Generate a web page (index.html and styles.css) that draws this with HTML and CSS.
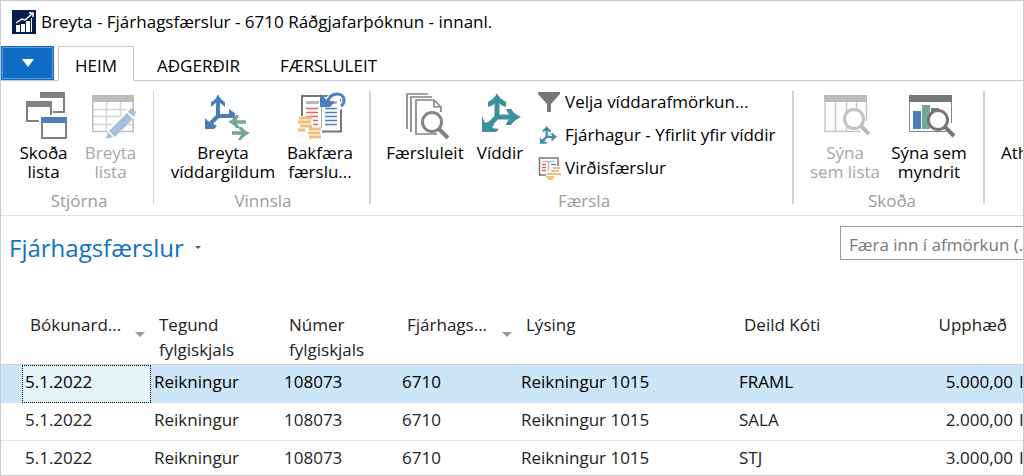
FILE: index.html
```html
<!DOCTYPE html>
<html lang="is">
<head>
<meta charset="utf-8">
<title>Breyta - Fjárhagsfærslur</title>
<link rel="stylesheet" href="styles.css">
</head>
<body>
<svg class="defs" width="0" height="0" aria-hidden="true">
  <symbol id="axes" viewBox="0 0 48 48">
    <path d="M21 8V26M19 26H39M21 26L12 35" fill="none" stroke="currentColor" stroke-width="5"/>
    <path d="M21 2C23 7 27 9 30 11V16C26 15 23 13 21 10C19 13 16 15 12 16V11C15 9 19 7 21 2Z" fill="currentColor"/>
    <path d="M45 26C40 28 37 31 35 34H30C31 30 33 28 36 26C33 24 31 21 30 18H35C37 21 40 24 45 26Z" fill="currentColor"/>
    <path d="M6 25L9 32L14 30L18 34L16 37L23 38L20 41H6Z" fill="currentColor"/>
  </symbol>
  <symbol id="coins" viewBox="0 0 24 24">
    <path d="M1 2H14M0 6H13M2 10H14M0 14H7M11 13H23M10 17H22M11 21H23" stroke="#eac282" stroke-width="3"/>
  </symbol>
</svg>
<div class="window">
  <header class="titlebar">
    <svg class="app-icon" viewBox="0 0 24 24" aria-hidden="true">
      <path d="M0 0H24V24H0Z" fill="#051f4d"/>
      <path d="M4 15H8V22H4ZM9 14H13V22H9ZM14 11H18V22H14ZM19 8H20V22H19Z" fill="#fff"/>
      <path d="M4 13L10 9L13 10L20 4M17 3H21V7" fill="none" stroke="#fff" stroke-width="1.5"/>
    </svg>
    <h1 class="window-title">Breyta - Fjárhagsfærslur - 6710 Ráðgjafarþóknun - innanl.</h1>
  </header>

  <nav class="tabs">
    <button class="app-menu" type="button" aria-label="Valmynd">
      <svg width="12" height="8" viewBox="0 0 12 8"><path d="M0 0H12L6 8Z" fill="#fff"/></svg>
    </button>
    <button class="tab tab-active" type="button">HEIM</button>
    <button class="tab" type="button">AÐGERÐIR</button>
    <button class="tab" type="button">FÆRSLULEIT</button>
  </nav>

  <section class="ribbon">
    <div class="group group-manage">
      <div class="group-items">
        <button class="command" type="button">
          <svg class="icon" viewBox="0 0 48 48">
            <path d="M20 1H45V22H33V20H43V7H20Z" fill="#808080"/>
            <path d="M6 10H32V24H30V16H8V29H19V31H6Z" fill="#808080"/>
            <path d="M21 32H47V48H21ZM23 32V46H45V32Z" fill="#808080" fill-rule="evenodd"/>
            <path d="M21 26H47V32H21Z" fill="#4b80ba"/>
          </svg>
          <span>Skoða<br>lista</span>
        </button>
        <button class="command" type="button" disabled>
          <svg class="icon" viewBox="0 0 48 48">
            <path d="M6 11V40.500H46V11M6 18.500H46M6 25.500H46M6 33.500H46M19.500 11V40M33.500 11V40" fill="none" stroke="#d4d4d4" stroke-width="1.500"/>
            <path d="M5 4H47V11H5ZM5 11H6V41H5ZM46 11H47V41H46ZM5 40H47V41H5Z" fill="#bcbcbc"/>
            <path d="M20 48L21 38L42 17L50 24L29 45Z" fill="#fff"/>
            <path d="M19 48L21 41L26 46ZM22 40L40 22L46 28L28 46ZM41 21L44 17L49 21L47 26Z" fill="#a5c1de"/>
          </svg>
          <span>Breyta<br>lista</span>
        </button>
      </div>
      <div class="group-label">Stjórna</div>
    </div>

    <div class="group group-process">
      <div class="group-items">
        <button class="command command-wide" type="button">
          <svg class="icon" viewBox="0 0 48 48">
            <path d="M19 9V25H36M20 24L11 33" fill="none" stroke="#4b7db5" stroke-width="4"/>
            <path d="M19 3C21 8 24 10 26 11V16L19 10L12 16V11C15 10 17 8 19 3ZM30 18L37 23H30ZM6 27L9 30L18 35L15 38H6Z" fill="#4b7db5"/>
            <path d="M34 31H47M33 42H46" stroke="#73a893" stroke-width="3.500"/>
            <path d="M29 31C33 29 35 27 37 24H40L37 31L41 37H37C35 34 32 32 29 31ZM51 42C47 44 44 46 42 49H39L43 42L39 36H43C45 39 48 41 51 42Z" fill="#73a893"/>
          </svg>
          <span>Breyta<br>víddargildum</span>
        </button>
        <button class="command command-reverse" type="button">
          <svg class="icon" viewBox="0 0 48 48">
            <path d="M6 25V5H45V40.500H26" fill="none" stroke="#777" stroke-width="2"/>
            <path d="M25.500 15V37" stroke="#aaa"/>
            <path d="M10 10H23V13H10ZM36 10H41V13H36Z" fill="#b8b8b8"/>
            <path d="M10 17.500H22M10 21.500H22M10 25.500H22M17 29.500H22M17 33.500H22" stroke="#d9694f" stroke-width="1.400"/>
            <path d="M29 17.500H41M29 21.500H41M29 25.500H41M29 29.500H41M29 33.500H41" stroke="#4b80ba" stroke-width="1.400"/>
            <path d="M32 11C35 0 48 1 48 9Q48 14 43 16" fill="none" stroke="#fff" stroke-width="6"/>
            <path d="M31 12C34 0 48 1 48 9Q48 13 45 15" fill="none" stroke="#4b80ba" stroke-width="3"/>
            <path d="M24 3L31 9L39 11L34 16H24Z" fill="#4b80ba"/>
            <use href="#coins" x="2" y="25" width="24" height="24"/>
          </svg>
          <span>Bakfæra<br>færslu...</span>
        </button>
      </div>
      <div class="group-label">Vinnsla</div>
    </div>

    <div class="group group-entry">
      <div class="group-items">
        <button class="command command-search" type="button">
          <svg class="icon" viewBox="0 0 48 48">
            <path d="M6 38V3H27M10 41V6H31M36 43H15V9H33L40 16V21M33 9V16H40" fill="none" stroke="#858585" stroke-width="1.700"/>
            <circle cx="31" cy="31" r="9.500" fill="#fff" stroke="#858585" stroke-width="3"/>
            <path d="M38 38L47 47" stroke="#808080" stroke-width="4"/>
          </svg>
          <span>Færsluleit</span>
        </button>
        <button class="command command-dims" type="button">
          <svg class="icon teal" viewBox="0 0 48 48"><use href="#axes"/></svg>
          <span>Víddir</span>
        </button>
        <div class="small-list">
          <button class="small-command" type="button">
            <svg class="small-icon" viewBox="0 0 22 22"><path d="M0 1H22V3L13 13V21H9V13L0 3Z" fill="#777"/></svg>
            Velja víddarafmörkun...
          </button>
          <button class="small-command" type="button">
            <svg class="small-icon teal" viewBox="2 -2 48 48"><use href="#axes" width="48" height="48"/></svg>
            Fjárhagur - Yfirlit yfir víddir
          </button>
          <button class="small-command" type="button">
            <svg class="small-icon" viewBox="0 0 22 22">
              <path d="M8 18H1.500V1H20V9" fill="none" stroke="#777" stroke-width="1.500"/>
              <path d="M4 4.500H17M10.500 4V14" stroke="#bbb" stroke-width="1.500"/>
              <path d="M4 7.500H8M4 10.500H8M4 13.500H8" stroke="#d9694f" stroke-width="1.300"/>
              <path d="M13 7.500H18" stroke="#4b80ba" stroke-width="1.300"/>
              <path d="M15 11H22M13 14H21M15 17H23M9 17H15M8 20H16M10 22H15" stroke="#eac282" stroke-width="2"/>
            </svg>
            Virðisfærslur
          </button>
        </div>
      </div>
      <div class="group-label">Færsla</div>
    </div>

    <div class="group group-view">
      <div class="group-items">
        <button class="command command-list" type="button" disabled>
          <svg class="icon" viewBox="0 0 48 48">
            <path d="M3 4H46V11H3Z" fill="#bcbcbc"/>
            <path d="M4 11V40.500H40M14.500 11V40M25.500 11V40M35.500 11V19M45.500 11V30" fill="none" stroke="#c8c8c8" stroke-width="1.500"/>
            <circle cx="33" cy="28" r="9.500" fill="#fff" stroke="#c2c2c2" stroke-width="3"/>
            <path d="M40 35L48 43" stroke="#bcbcbc" stroke-width="4"/>
          </svg>
          <span>Sýna<br>sem lista</span>
        </button>
        <button class="command command-chart" type="button">
          <svg class="icon" viewBox="0 0 48 48">
            <path d="M4 4H47V11H4Z" fill="#777"/>
            <path d="M4.500 11V40.500H41M46.500 11V32" fill="none" stroke="#858585"/>
            <path d="M8 20H16V38H8Z" fill="#4b80ba"/>
            <path d="M17 14H25V38H17Z" fill="#73a893"/>
            <path d="M26 17H34V30H26Z" fill="#777"/>
            <circle cx="33" cy="29" r="9.500" fill="#fff" stroke="#777" stroke-width="3"/>
            <path d="M40 36L49 45" stroke="#777" stroke-width="4"/>
          </svg>
          <span>Sýna sem<br>myndrit</span>
        </button>
      </div>
      <div class="group-label">Skoða</div>
    </div>

    <div class="group group-next">
      <div class="group-items">
        <button class="command command-next" type="button">
          <svg class="icon" viewBox="0 0 48 48"></svg>
          <span>Ath</span>
        </button>
      </div>
    </div>
  </section>

  <section class="page-head">
    <h2 class="page-title">Fjárhagsfærslur</h2>
    <button class="title-menu" type="button" aria-label="Afmörkun">
      <svg width="6" height="3" viewBox="0 0 6 3"><path d="M0 0H6L3 3Z" fill="#555"/></svg>
    </button>
    <input class="filter" type="text" placeholder="Færa inn í afmörkun (..." aria-label="Færa inn í afmörkun">
  </section>

  <table class="grid">
    <colgroup>
      <col class="c-select"><col class="c-date"><col class="c-type"><col class="c-number"><col class="c-account"><col class="c-text"><col class="c-dept"><col class="c-amount"><col class="c-more">
    </colgroup>
    <thead>
      <tr>
        <th></th>
        <th class="sorted">Bókunard...</th>
        <th>Tegund fylgiskjals</th>
        <th>Númer fylgiskjals</th>
        <th class="sorted">Fjárhags...</th>
        <th>Lýsing</th>
        <th>Deild Kóti</th>
        <th class="amount">Upphæð</th>
        <th></th>
      </tr>
    </thead>
    <tbody>
      <tr class="selected"><td></td><td class="focus">5.1.2022</td><td>Reikningur</td><td>108073</td><td>6710</td><td>Reikningur 1015</td><td>FRAML</td><td class="amount">5.000,00</td><td>I</td></tr>
      <tr><td></td><td>5.1.2022</td><td>Reikningur</td><td>108073</td><td>6710</td><td>Reikningur 1015</td><td>SALA</td><td class="amount">2.000,00</td><td>I</td></tr>
      <tr><td></td><td>5.1.2022</td><td>Reikningur</td><td>108073</td><td>6710</td><td>Reikningur 1015</td><td>STJ</td><td class="amount">3.000,00</td><td>I</td></tr>
    </tbody>
  </table>
</div>
</body>
</html>
```
FILE: styles.css
```css
* {
  box-sizing: border-box;
}

body {
  margin: 0;
  background: #fff;
  color: #000;
  font: 17px/20px "Open Sans", "Noto Sans", sans-serif;
}

button,
input {
  margin: 0;
  padding: 0;
  border: 0;
  background: none;
  color: inherit;
  font: inherit;
}

h1,
h2 {
  margin: 0;
  font-weight: 400;
}

.defs {
  position: absolute;
}

.window {
  height: 100vh;
  overflow: hidden;
  border: 1px solid #ccc;
}

.titlebar {
  display: flex;
  align-items: center;
  gap: 5px;
  height: 45px;
  padding: 0 11px 4px;
}

.app-icon {
  width: 24px;
  height: 24px;
}

.window-title {
  font-size: 17px;
  white-space: nowrap;
}

.tabs {
  display: flex;
  height: 35px;
  border-bottom: 1px solid #ccc;
}

.app-menu {
  width: 53px;
  height: 34px;
  margin-right: 4px;
  border: 1px solid #0e6cc4;
  outline: 1px solid #5b9bd8;
  outline-offset: -2px;
  background: #0e6cc4;
}

.app-menu svg {
  display: block;
  margin: 0 auto;
}

.tab {
  height: 35px;
  padding: 4px 16px 0;
  border: 1px solid transparent;
  margin-right: 6px;
}

.tab-active {
  border-color: #ccc;
  border-bottom-color: #fff;
  background: #fff;
}

.ribbon {
  display: flex;
  overflow: hidden;
  padding-top: 10px;
  height: 135px;
  border-bottom: 1px solid #e2e2e2;
}

.group {
  display: flex;
  flex: none;
  flex-direction: column;
  height: 113px;
  padding: 0 9px;
  border-right: 2px solid #d2d2d2;
}

.group-items {
  display: flex;
  flex: none;
  height: 102px;
}

.group-label {
  color: #9c9c9c;
  line-height: 16px;
  padding-left: 4px;
  text-align: center;
}

.command {
  display: flex;
  flex-direction: column;
  align-items: center;
  width: 67px;
  line-height: 19px;
  height: 94px;
  gap: 4px;
  white-space: nowrap;
}

.command:disabled {
  color: #a6a6a6;
}

.icon {
  flex: none;
  width: 48px;
  height: 48px;
  overflow: visible;
}

.teal {
  color: #3f909f;
}

.command-wide {
  width: 118px;
}

.command-reverse {
  width: 76px;
}

.command-search {
  width: 88px;
}

.command-dims {
  width: 62px;
}

.command-list {
  width: 78px;
}

.command-chart {
  width: 90px;
}

.group-manage {
  border-right-width: 1px;
}

.group-process {
  padding: 0 11px 0 10px;
}

.group-entry {
  width: 423px;
  padding-left: 10px;
}

.group-view {
  width: 191px;
  padding: 0 9px 0 12px;
}

.group-next {
  border-right: 0;
  padding-left: 16px;
}

.command-next {
  align-items: flex-start;
}

.small-list {
  display: flex;
  flex-direction: column;
  gap: 11px;
  padding-left: 7px;
}

.small-command {
  display: flex;
  align-items: center;
  gap: 5px;
  height: 22px;
  white-space: nowrap;
}

.small-icon {
  width: 22px;
  height: 22px;
  overflow: visible;
}

.page-head {
  display: flex;
  align-items: flex-start;
  height: 85px;
  padding: 10px 0 0 8px;
  overflow: hidden;
}

.page-title {
  color: #1170c8;
  font-size: 24px;
  line-height: 44px;
}

.title-menu {
  display: flex;
  align-items: center;
  height: 42px;
  margin-left: 11px;
}

.filter {
  flex: none;
  width: 186px;
  height: 34px;
  margin-right: -3px;
  margin-left: auto;
  padding: 2px 0 0 8px;
  border: 1px solid #999;
}

.filter::placeholder {
  color: #777;
  opacity: 1;
}

.grid {
  width: 100%;
  border-collapse: separate;
  border-spacing: 0;
  table-layout: fixed;
  color: #222;
}

.c-select { width: 21px; }
.c-date { width: 129px; }
.c-type { width: 130px; }
.c-number { width: 118px; }
.c-account { width: 119px; }
.c-text { width: 218px; }
.c-amount { width: 140px; }
.c-more { width: 7px; }

.grid th {
  height: 64px;
  padding: 11px 9px 0 8px;
  border-bottom: 1px solid #ccc;
  font-weight: 400;
  line-height: 25px;
  text-align: left;
  vertical-align: top;
}

.grid .sorted {
  position: relative;
}

.sorted::after {
  content: "";
  position: absolute;
  top: 31px;
  right: 6px;
  border: 5px solid transparent;
  border-top-color: #999;
  border-bottom: 0;
}

.grid td {
  height: 38px;
  padding: 0 3px 4px;
  border-bottom: 1px solid #e8e8e8;
  overflow: hidden;
  white-space: nowrap;
}

.grid .amount {
  text-align: right;
}

.selected {
  background: #cce5f7;
  color: #000;
}

.grid .selected td {
  border-bottom-color: #cce5f7;
}

.grid .selected .focus {
  border: 1px dotted #000;
  padding-left: 2px;
  background: #e4f2fa;
}
```
